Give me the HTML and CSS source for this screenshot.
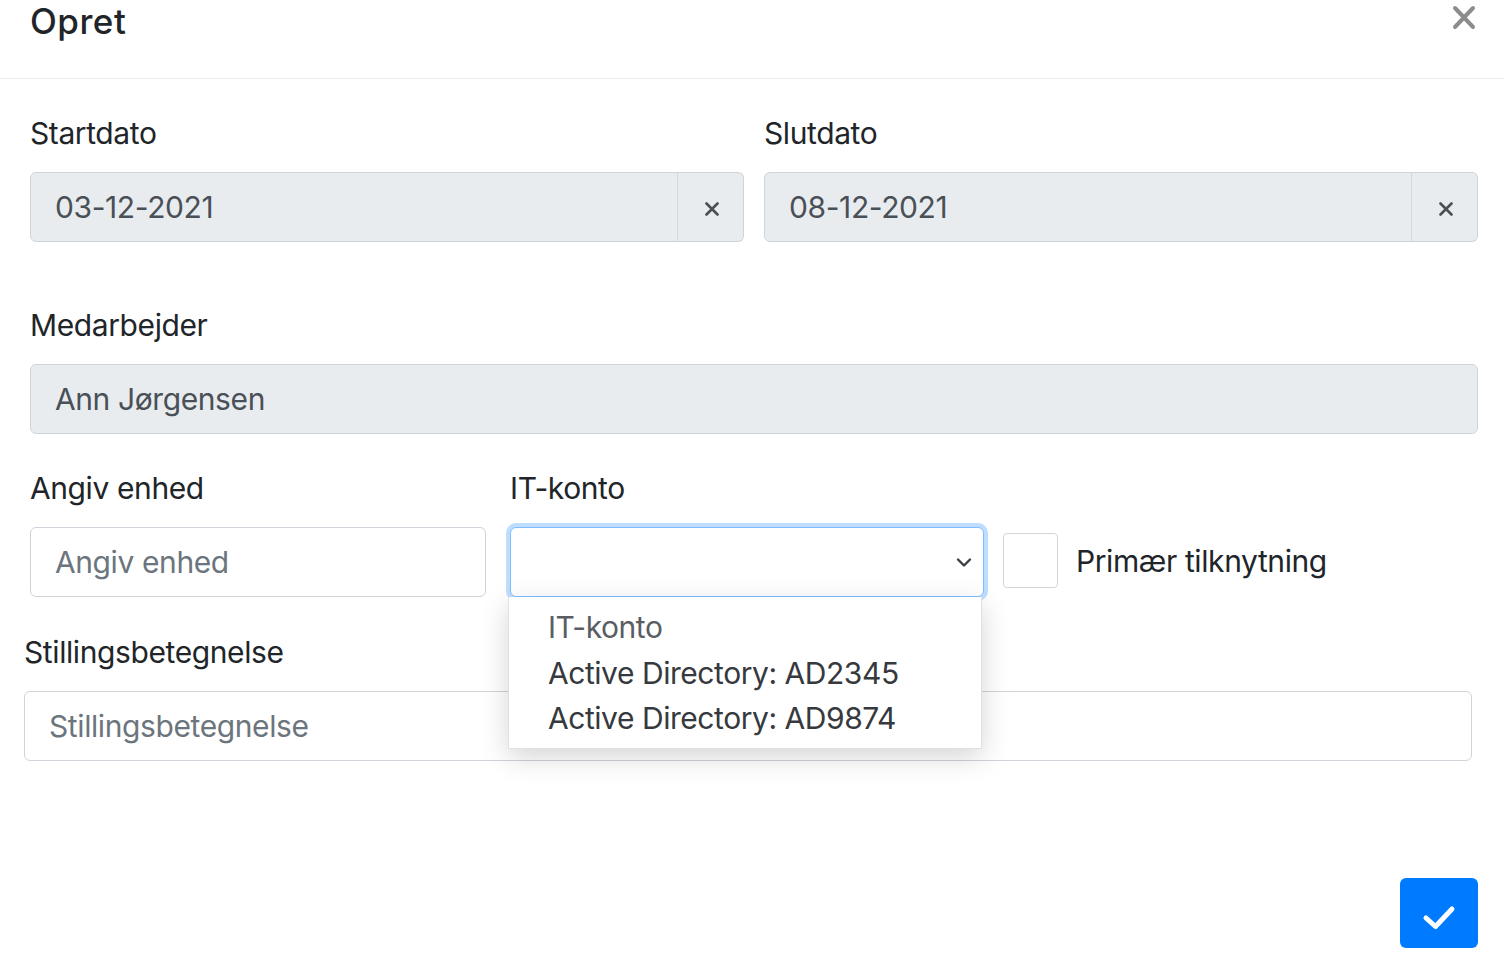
FILE: index.html
```html
<!DOCTYPE html>
<html lang="da">
<head>
<meta charset="utf-8">
<title>Opret</title>
<link rel="stylesheet" href="styles.css">
</head>
<body>
<div class="modal">
  <header class="modal-header">
    <h5 class="modal-title">Opret</h5>
    <button class="close" type="button" aria-label="Luk">
      <svg width="24" height="25" viewBox="0 0 24 25"><path d="M3 3 L21 22 M21 3 L3 22" stroke="#8c8c8c" stroke-width="4" stroke-linecap="round" fill="none"/></svg>
    </button>
  </header>
  <div class="modal-body">
    <div class="row-dates">
      <div class="group">
        <label class="label">Startdato</label>
        <div class="input-group">
          <div class="form-control readonly">03-12-2021</div>
          <span class="append"><svg width="16" height="14" viewBox="0 0 16 14"><path d="M2.5 1.5 L13.5 12.5 M13.5 1.5 L2.5 12.5" stroke="#4a4f55" stroke-width="2.6" stroke-linecap="round"/></svg></span>
        </div>
      </div>
      <div class="group">
        <label class="label">Slutdato</label>
        <div class="input-group">
          <div class="form-control readonly">08-12-2021</div>
          <span class="append"><svg width="16" height="14" viewBox="0 0 16 14"><path d="M2.5 1.5 L13.5 12.5 M13.5 1.5 L2.5 12.5" stroke="#4a4f55" stroke-width="2.6" stroke-linecap="round"/></svg></span>
        </div>
      </div>
    </div>

    <div class="group group-employee">
      <label class="label">Medarbejder</label>
      <div class="form-control readonly">Ann Jørgensen</div>
    </div>

    <div class="row-unit">
      <div class="group col-unit">
        <label class="label">Angiv enhed</label>
        <div class="form-control placeholder">Angiv enhed</div>
      </div>
      <div class="group col-account">
        <label class="label">IT-konto</label>
        <div class="select focused">
          <svg class="chevron" width="16" height="11" viewBox="0 0 16 11"><path d="M2 2.5 L8 8.5 L14 2.5" stroke="#3a3f44" stroke-width="2.4" stroke-linecap="round" stroke-linejoin="round" fill="none"/></svg>
        </div>
        <ul class="dropdown">
          <li class="opt opt-muted">IT-konto</li>
          <li class="opt">Active Directory: AD2345</li>
          <li class="opt">Active Directory: AD9874</li>
        </ul>
      </div>
      <div class="check">
        <span class="box"></span>
        <span class="check-label">Primær tilknytning</span>
      </div>
    </div>

    <div class="group group-title">
      <label class="label">Stillingsbetegnelse</label>
      <div class="form-control placeholder">Stillingsbetegnelse</div>
    </div>
  </div>
  <footer class="modal-footer">
    <button class="btn-primary" type="button" aria-label="Gem">
      <svg width="78" height="70" viewBox="0 0 78 70"><path d="M26 40 L35.5 48.5 L52 31" stroke="#fff" stroke-width="5" stroke-linecap="round" stroke-linejoin="round" fill="none"/></svg>
    </button>
  </footer>
</div>
</body>
</html>
```

FILE: styles.css
```css
* { box-sizing: border-box; }

html, body {
  margin: 0;
  padding: 0;
  background: #fff;
}

body {
  font-family: Inter, "Liberation Sans", Arial, sans-serif;
  color: #212529;
  font-size: 30px;
  letter-spacing: -0.4px;
  overflow: hidden;
}

.modal {
  width: 1504px;
  height: 955px;
  background: #fff;
}

.modal-header {
  height: 79px;
  display: flex;
  justify-content: space-between;
  align-items: flex-start;
  padding: 0 28px 0 30px;
  border-bottom: 1px solid #e9ecef;
}

.modal-title {
  margin: 0;
  font-size: 35px;
  font-weight: 500;
  line-height: 42px;
  letter-spacing: 0.5px;
  color: #212529;
}

.close {
  margin-top: 5px;
  padding: 0;
  border: 0;
  background: transparent;
  line-height: 0;
}

.modal-body {
  padding: 32px 26px 0 30px;
}

.label {
  display: block;
  line-height: 45px;
  margin-bottom: 16px;
  color: #212529;
}

.row-dates {
  display: grid;
  grid-template-columns: 1fr 1fr;
  column-gap: 20px;
}

.input-group {
  display: flex;
  height: 70px;
}

.form-control {
  height: 70px;
  line-height: 68px;
  padding: 0 24px;
  border: 1px solid #ced4da;
  border-radius: 6px;
  color: #495057;
}

.readonly {
  background: #e9ecef;
}

.input-group .form-control {
  flex: 1;
  border-top-right-radius: 0;
  border-bottom-right-radius: 0;
}

.append {
  width: 67px;
  display: flex;
  align-items: center;
  justify-content: center;
  padding-top: 4px;
  padding-left: 2px;
  background: #e9ecef;
  border: 1px solid #ced4da;
  border-left: 1px solid #d3d8dd;
  margin-left: -1px;
  border-radius: 0 6px 6px 0;
}

.group-employee {
  margin-top: 61px;
}

.placeholder {
  color: #6c757d;
  background: #fff;
}

.row-unit {
  margin-top: 32px;
  display: flex;
  align-items: flex-end;
}

.col-unit {
  width: 456px;
}

.col-account {
  width: 474px;
  margin-left: 24px;
  position: relative;
}

.select {
  height: 70px;
  border: 1px solid #80bdff;
  border-radius: 6px;
  background: #fff;
  position: relative;
}

.focused {
  box-shadow: 0 0 0 4px rgba(0, 123, 255, 0.25);
}

.chevron {
  position: absolute;
  right: 11px;
  top: 29px;
}

.dropdown {
  position: absolute;
  z-index: 5;
  left: -2px;
  top: 100%;
  width: 474px;
  margin: 0;
  padding: 8px 0 0 39px;
  height: 152px;
  list-style: none;
  background: #fff;
  border: 1px solid #e1e1e1;
  border-top: 0;
  box-shadow: 0 8px 26px rgba(0, 0, 0, 0.17);
}

.opt {
  font-size: 30px;
  line-height: 45.5px;
  letter-spacing: -0.45px;
  color: #36393d;
  white-space: nowrap;
}

.opt-muted {
  color: #5a5e63;
}

.check {
  height: 70px;
  display: flex;
  align-items: center;
  margin-left: 19px;
  padding-bottom: 3px;
}

.box {
  width: 55px;
  height: 55px;
  border: 1px solid #d5d5d5;
  border-radius: 4px;
  background: #fff;
}

.check-label {
  margin-left: 18px;
  color: #212529;
}

.group-title {
  margin-top: 33px;
  margin-left: -6px;
  margin-right: 6px;
}

.modal-footer {
  display: flex;
  justify-content: flex-end;
  padding: 117px 26px 0 0;
}

.btn-primary {
  width: 78px;
  height: 70px;
  padding: 0;
  border: 0;
  border-radius: 6px;
  background: #007bff;
  line-height: 0;
}
```
